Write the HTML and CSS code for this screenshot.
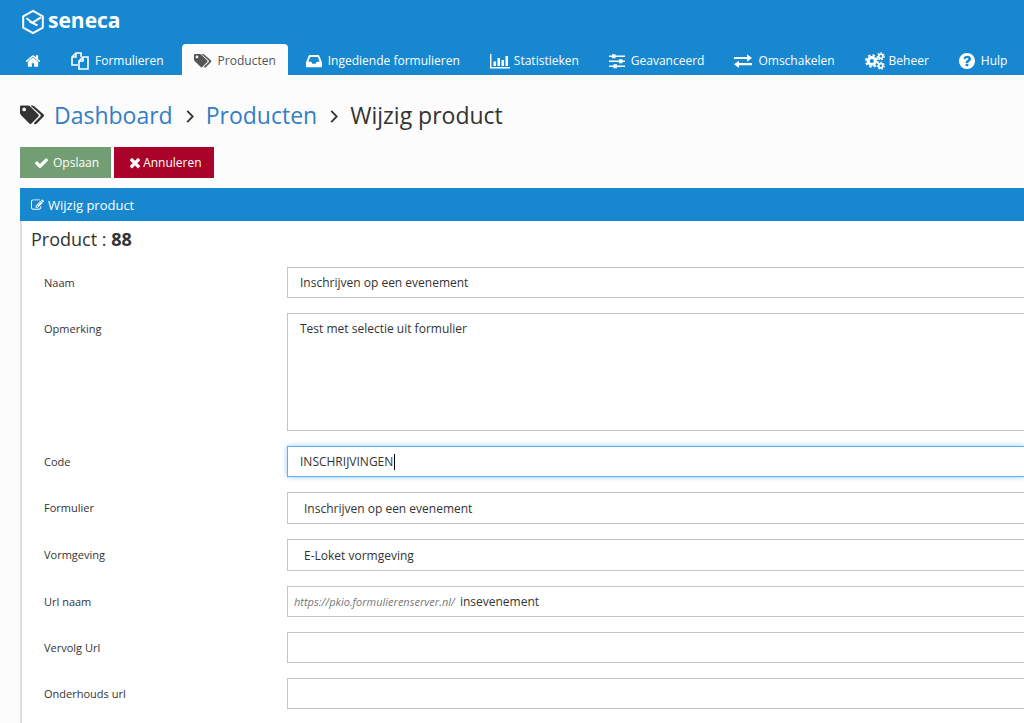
FILE: index.html
```html
<!DOCTYPE html>
<html lang="nl">
<head>
<meta charset="utf-8">
<title>Wijzig product</title>
<link rel="stylesheet" href="styles.css">
</head>
<body>
<svg class="defs" aria-hidden="true">
  <symbol id="tags" viewBox="0 0 20 16">
    <path fill-rule="evenodd" d="M0 1.4Q0 .3 1.1.3H6.200Q7.300.3 8.200 1.100L14.700 7.500Q15.500 8.400 14.700 9.200L9.200 14.800Q8.300 15.600 7.500 14.800L.9 8.200Q0 7.300 0 6.200ZM3.300 2A1.500 1.500 0 1 0 3.300 5A1.500 1.500 0 1 0 3.300 2Z"/>
    <path d="M8.300.3H9.700Q10.800.3 11.700 1.100L18.900 7.500Q19.800 8.400 18.900 9.200L13.200 15Q12.300 15.700 11.400 14.900L11 14.500L16.300 9.200Q17.100 8.400 16.300 7.500Z"/>
  </symbol>
</svg>
<header class="topbar">
  <a class="brand" href="#">
    <svg class="brand-mark" viewBox="0 0 24 26" aria-hidden="true"><path d="M12 1.800L21.800 7.300V18.700L12 24.200L2.200 18.700V7.300Z"/><path d="M5.500 9.300L11.500 13.700L20 8.300M8.500 12.500L16.500 16.300"/></svg>
    <span>seneca</span>
  </a>
  <nav class="nav">
    <a href="#" aria-label="Home"><svg class="icon" viewBox="0 128 1792 1536"><path d="M1472 992v480q0 26-19 45t-45 19h-384v-384h-256v384h-384q-26 0-45-19t-19-45v-480q0-1 .5-3t.5-3l575-474 575 474q1 2 1 6zm223-69l-62 74q-8 9-21 11h-3q-13 0-21-7l-692-577-692 577q-12 8-24 7-13-2-21-11l-62-74q-8-10-7-23.500t11-21.500l719-599q32-26 76-26t76 26l244 204v-195q0-14 9-23t23-9h192q14 0 23 9t9 23v408l219 182q10 8 11 21.500t-7 23.500z"/></svg></a>
    <a href="#"><svg class="icon wide outline" viewBox="0 0 18 18"><path d="M10 5V1H5L1 5V13H7M5 1V5H1M17 5V17H8V9L12 5ZM12 5V9H8"/></svg>Formulieren</a>
    <a href="#" class="active"><svg class="icon wide"><use href="#tags"/></svg>Producten</a>
    <a href="#"><svg class="icon" viewBox="0 0 16 16"><path fill-rule="evenodd" d="M3.800 2H12.200Q13 2 13.300 2.800L15.700 8.700Q16 9.300 16 10V13.300Q16 14.300 15 14.300H1Q0 14.300 0 13.300V10Q0 9.300.3 8.700L2.700 2.800Q3 2 3.800 2ZM4.200 4L2.300 8.700H5.300L6.300 10.700H9.700L10.700 8.700H13.700L11.800 4Z"/></svg>Ingediende formulieren</a>
    <a href="#" class="tight"><svg class="icon chart" viewBox="0 0 20 16"><path d="M0 1H1.400V14H20V15.400H0ZM3.500 8.500H6V13H3.500ZM7.500 5H10V13H7.500ZM11.500 7H14V13H11.500ZM15.500 3H18V13H15.500Z"/></svg>Statistieken</a>
    <a href="#"><svg class="icon" viewBox="0 0 16 16"><path d="M0 2.500H16V4.100H0ZM0 7.500H16V9.100H0ZM0 12.500H16V14.100H0Z"/><path d="M3 1.300H6.500V5.200H3ZM10 6.300H13.500V10.200H10ZM4.500 11.300H8V15.200H4.500Z"/></svg>Geavanceerd</a>
    <a href="#"><svg class="icon wide" viewBox="0 0 18 16"><path d="M0 4H13V1.300L18 5L13 8.700V6H0ZM18 10H5V7.800L0 11.300L5 15V12.200H18Z"/></svg>Omschakelen</a>
    <a href="#" class="tight"><svg class="icon chart" viewBox="0 0 20 18"><g class="gear"><circle cx="6.800" cy="9" r="3.600" stroke-width="3"/><circle cx="6.800" cy="9" r="5.800" stroke-width="2" stroke-dasharray="2.400 2.155"/><circle cx="15.800" cy="4.300" r="2.100" stroke-width="1.700"/><circle cx="15.800" cy="4.300" r="3.400" stroke-width="1.300" stroke-dasharray="1.500 1.550"/><circle cx="15.800" cy="13.700" r="2.100" stroke-width="1.700"/><circle cx="15.800" cy="13.700" r="3.400" stroke-width="1.300" stroke-dasharray="1.500 1.550"/></g></svg>Beheer</a>
    <a href="#"><svg class="icon" viewBox="128 128 1536 1536"><path d="M1024 1376v-192q0-14-9-23t-23-9h-192q-14 0-23 9t-9 23v192q0 14 9 23t23 9h192q14 0 23-9t9-23zm256-672q0-88-55.500-163t-138.500-116-170-41q-243 0-371 213-15 24 8 42l132 100q7 6 19 6 16 0 25-12 53-68 86-92 34-24 86-24 48 0 85.500 26t37.500 59q0 38-20 61t-68 45q-63 28-115.500 86.500t-52.500 125.500v36q0 14 9 23t23 9h192q14 0 23-9t9-23q0-19 21.500-49.500t54.500-49.500q32-18 49-28.500t46-35 44.500-48 28-60.500 12.500-81zm384 192q0 209-103 385.500t-279.500 279.500-385.500 103-385.500-103-279.500-279.500-103-385.500 103-385.500 279.500-279.500 385.500-103 385.500 103 279.500 279.500 103 385.500z"/></svg>Hulp</a>
  </nav>
</header>
<main class="page">
  <h1 class="crumbs">
    <svg class="crumb-icon" aria-hidden="true"><use href="#tags"/></svg>
    <a href="#">Dashboard</a>
    <svg class="chevron" viewBox="0 0 8 14" aria-hidden="true"><path d="M1 1L7 7L1 13"/></svg>
    <a href="#">Producten</a>
    <svg class="chevron" viewBox="0 0 8 14" aria-hidden="true"><path d="M1 1L7 7L1 13"/></svg>
    <span>Wijzig product</span>
  </h1>
  <div class="actions">
    <button type="submit" form="product" class="btn save"><svg viewBox="128 200 1536 1400" aria-hidden="true"><path d="M1671 566q0 40-28 68l-724 724-136 136q-28 28-68 28t-68-28l-136-136-362-362q-28-28-28-68t28-68l136-136q28-28 68-28t68 28l294 295 656-657q28-28 68-28t68 28l136 136q28 28 28 68z"/></svg>Opslaan</button>
    <button type="button" class="btn cancel"><svg viewBox="302 302 1188 1284" aria-hidden="true"><path d="M1490 1322q0 40-28 68l-136 136q-28 28-68 28t-68-28l-294-294-294 294q-28 28-68 28t-68-28l-136-136q-28-28-28-68t28-68l294-294-294-294q-28-28-28-68t28-68l136-136q28-28 68-28t68 28l294 294 294-294q28-28 68-28t68 28l136 136q28 28 28 68t-28 68l-294 294 294 294q28 28 28 68z"/></svg>Annuleren</button>
  </div>
  <section class="panel">
    <h2 class="panel-title"><svg viewBox="0 128 1792 1536" aria-hidden="true"><path d="M888 1184l116-116-152-152-116 116v56h96v96h56zm440-720q-16-16-33 1l-350 350q-17 17-1 33t33-1l350-350q17-17 1-33zm80 594v190q0 119-84.500 203.500t-203.500 84.500h-832q-119 0-203.500-84.500t-84.500-203.500v-832q0-119 84.500-203.500t203.500-84.500h832q63 0 117 25 15 7 18 23 3 17-9 29l-49 49q-14 14-32 8-23-6-45-6h-832q-66 0-113 47t-47 113v832q0 66 47 113t113 47h832q66 0 113-47t47-113v-126q0-13 9-22l64-64q15-15 35-7t20 29zm-96-738l288 288-672 672h-288v-288zm444 132l-92 92-288-288 92-92q28-28 68-28t68 28l152 152q28 28 28 68t-28 68z"/></svg>Wijzig product</h2>
    <form id="product" class="panel-body">
      <h3 class="product-id">Product : <strong>88</strong></h3>
      <div class="fields">
        <div class="row"><label for="naam">Naam</label><input class="control" id="naam" type="text" value="Inschrijven op een evenement"></div>
        <div class="row"><label for="opmerking">Opmerking</label><textarea class="control" id="opmerking">Test met selectie uit formulier</textarea></div>
        <div class="row"><label for="code">Code</label><div class="code-box"><input class="control focused" id="code" type="text" value="INSCHRIJVINGEN"><span class="caret"></span></div></div>
        <div class="row"><label for="formulier">Formulier</label><select class="control" id="formulier"><option>Inschrijven op een evenement</option></select></div>
        <div class="row"><label for="vormgeving">Vormgeving</label><select class="control" id="vormgeving"><option>E-Loket vormgeving</option></select></div>
        <div class="row"><label for="urlnaam">Url naam</label><div class="control url-box"><span class="prefix">https://pkio.formulierenserver.nl/</span><input id="urlnaam" type="text" value="insevenement"></div></div>
        <div class="row"><label for="vervolg">Vervolg Url</label><input class="control" id="vervolg" type="text"></div>
        <div class="row"><label for="onderhoud">Onderhouds url</label><input class="control" id="onderhoud" type="text"></div>
      </div>
    </form>
  </section>
</main>
</body>
</html>
```
FILE: styles.css
```css
* { box-sizing: border-box; }

body {
  margin: 0;
  background: #fcfcfc;
  color: #333;
  font-family: "Open Sans", "Noto Sans", sans-serif;
  font-size: 12px;
  overflow-x: hidden;
}

.defs { display: none; }
a { text-decoration: none; }

.topbar { background: #1788d0; }

.brand {
  display: flex;
  align-items: center;
  gap: 3px;
  height: 44px;
  padding-left: 21px;
  color: #fff;
  font-size: 21px;
  font-weight: 700;
}
.brand span { padding-bottom: 4px; }
.brand-mark { width: 24px; height: 26px; fill: none; stroke: #fff; stroke-width: 2; stroke-linejoin: round; }

.nav { display: flex; gap: 6px; padding-left: 13px; white-space: nowrap; }
.nav a {
  display: flex;
  align-items: center;
  gap: 6px;
  height: 31px;
  padding: 2px 12px 0;
  border-radius: 4px 4px 0 0;
  color: #fff;
}
.nav a.tight { gap: 4px; }
.nav a.active { background: #fcfcfc; color: #555; }
.icon { width: 16px; height: 16px; fill: currentColor; flex: none; }
.icon.wide { width: 18px; height: 18px; }
.icon.chart { width: 20px; height: 18px; }
.icon.outline { fill: none; stroke: currentColor; stroke-width: 1.600; }
.gear { fill: none; stroke: currentColor; }

.page { padding-left: 20px; }

.crumbs {
  display: flex;
  align-items: center;
  margin: 0;
  padding-top: 22px;
  font-size: 23px;
  line-height: 36px;
  font-weight: 400;
}
.crumbs a { color: #337ec4; }
.crumb-icon { width: 25px; height: 20px; margin-right: 9px; fill: #333; }
.chevron { width: 8px; height: 13px; margin: 2px 12px 0 13px; fill: none; stroke: #333; stroke-width: 2; }

.actions { display: flex; gap: 3px; padding: 14px 0 10px; }
.btn {
  display: flex;
  align-items: center;
  height: 31px;
  border: 0;
  color: #fff;
  font: inherit;
}
.btn svg { height: 12px; fill: #fff; }
.save { gap: 5px; padding: 0 12px 0 15px; background: #739e73; }
.save svg { width: 13px; }
.cancel { gap: 3px; padding: 0 12px 0 16px; background: #a90329; }
.cancel svg { width: 10px; }

.panel-title {
  display: flex;
  align-items: center;
  gap: 4px;
  height: 33px;
  margin: 0;
  padding-left: 11px;
  background: #1788d0;
  color: #fff;
  font-size: 13px;
  font-weight: 400;
}
.panel-title svg { width: 13px; height: 12px; fill: #fff; }

.panel-body { border-left: 2px solid #ddd; background: #fff; padding: 6px 0 32px 9px; }
.product-id { margin: 0; font-size: 18px; line-height: 25px; font-weight: 400; }

.fields { display: grid; gap: 15px; padding: 15px 0 0 13px; }
.row { display: grid; grid-template-columns: 243px 1fr; align-items: start; }
.row label { padding-top: 7px; line-height: 17px; font-size: 11px; }

.control {
  display: block;
  width: 100%;
  height: 31px;
  padding: 0 12px;
  border: 1px solid #c4c4c4;
  border-right: 0;
  border-radius: 0;
  background: #fff;
  color: #333;
  font: inherit;
  outline: 0;
}
textarea.control { height: 118px; padding-top: 6px; line-height: 17px; resize: none; }
select.control { height: 32px; padding: 1px 16px 0; appearance: none; }

.code-box { position: relative; }
.focused { border-color: #66afe9; box-shadow: 0 0 5px #8cc8f4; }
.caret { position: absolute; left: 107px; top: 8px; width: 1px; height: 16px; background: #000; }

.url-box { display: flex; align-items: center; gap: 5px; padding: 0 6px; }
.prefix { color: #777; font-style: italic; font-size: 11px; }
.url-box input { flex: 1; min-width: 0; border: 0; padding: 0; font: inherit; color: #333; outline: 0; background: none; }
```
